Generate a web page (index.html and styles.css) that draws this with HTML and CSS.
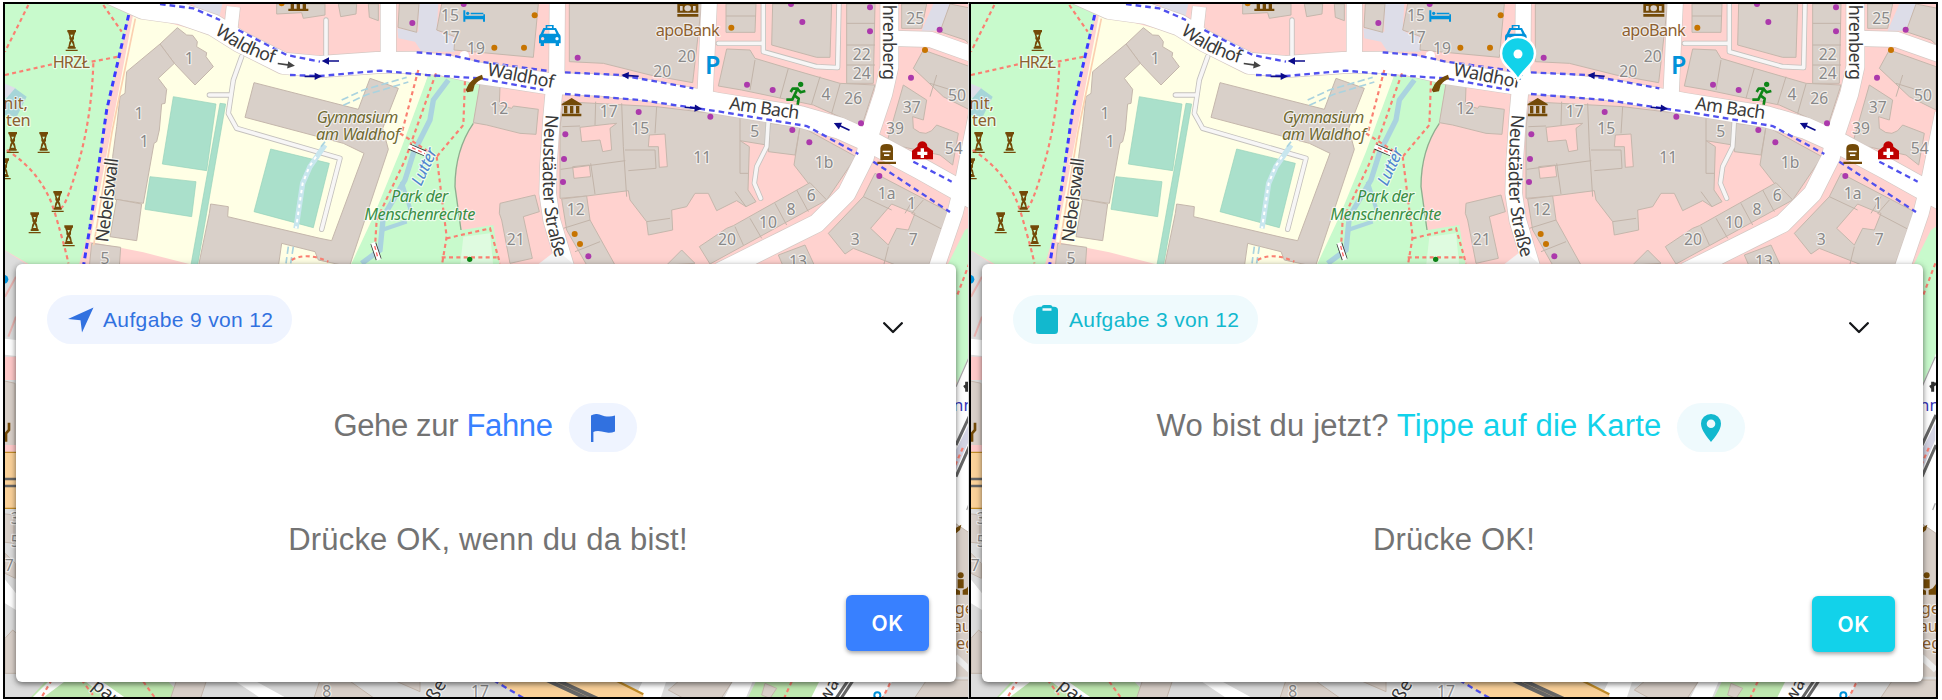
FILE: index.html
```html
<!DOCTYPE html>
<html lang="de">
<head>
<meta charset="utf-8">
<title>Aufgaben</title>
<link rel="stylesheet" href="styles.css">
</head>
<body>
<svg class="defs" width="0" height="0" aria-hidden="true">
  <defs>
    <path id="p-neu" d="M1637 343Q1625 480 1630 580Q1636 690 1670 785"/>
    <path id="p-wald1" d="M643 100Q725 165 830 192"/>
    <g id="monument"><path d="M-13-31H13V-24H-13ZM-18 28H18V32H-18ZM-12 20H12V25H-12ZM-11-24H11L7-12 7-4 4 0 7 5 10 20H-10L-7 5-4 0-7-4-7-12Z" fill="#734a08"/><path d="M-4-17H4L0-8ZM0 4L5 16H-5Z" fill="#c8facc"/></g>
    <path id="arrow" d="M-26-2.500H4V-11L26 0 4 11V2.500H-26Z"/>
  </defs>
</svg>

<template id="map-template">
<svg class="tiles" viewBox="15 12 2895 2079" preserveAspectRatio="xMinYMin slice">
  <rect x="0" y="0" width="2940" height="2100" fill="#ffd2cf"/>

  <!-- land use -->
  <path class="park" d="M0 0H350L388 45 320 330 270 680 235 800H100L0 742Z"/>
  <path class="school" d="M400 40L990 200 1290 205 1230 420 1060 800H600L430 757 270 725 345 330Z"/>
  <path class="park" d="M1285 225L1440 245 1420 370Q1365 450 1365 560L1385 690 1480 675 1500 800H1050L1120 650 1200 455Z"/>
  <path d="M1420 370Q1365 450 1365 560L1383 690" fill="none" stroke="#8fae8f" stroke-width="4"/>
  <path d="M1390 710L1470 700 1480 800H1380Z" fill="#dffbe0"/>
  <path class="plaza" d="M1255 12H1315L1310 90 1325 100 1360 110 1365 155 1265 155 1245 125 1195 115 1192 85 1255 95ZM570 0H670L655 62 600 35ZM2800 12H2850L2820 92H2765Z"/>
  <path class="plaza" d="M0 245L48 265 28 295 0 290Z"/>
  <path d="M45 265L80 290 50 350 15 345V300Z" fill="#a6d5d8"/>
  <path d="M0 742L90 800V2100H0Z" fill="#ddd"/>
  <path class="park" d="M2895 690L2840 800 2870 1150H2940V660Z"/>

  <!-- pitches -->
  <path class="pitch" d="M520 290L648 312 620 512 487 492ZM450 530L588 545 575 650 435 628ZM660 310L677 312 592 800H572ZM812 447L988 490 940 683 762 635Z"/>

  <!-- buildings -->
  <g class="bld">
    <path d="M480 132L532 83 560 105 578 106 592 125 590 140 620 158 618 170 640 200 585 255 523 190Z"/>
    <path d="M480 132L523 190 475 235 500 268 495 310 485 312 478 390 470 425 462 430 430 610 345 598 338 470 350 380 360 290 375 280 380 215Z"/>
    <path d="M350 598L425 612 410 722 330 710ZM275 730L362 742 358 800H268Z"/>
    <path d="M762 248L1075 328 1110 235 1195 265 1148 385 1165 448 1048 800 955 780 945 755 845 730 835 800H595L628 640 632 612 685 620 683 650 960 715 995 722 1092 460 1030 430 735 352Z"/>
    <path d="M830 12H975V45L910 55 905 38 830 42ZM1015 12H1070L1068 42 1022 50ZM1105 12H1135V62L1108 52ZM1198 12H1257L1250 97 1194 82ZM1325 12H1615L1600 172 1362 150 1365 110 1310 90Z"/>
    <path d="M1708 12H2105L2078 248 1950 225 1810 190 1708 185Z"/>
    <path d="M1440 250L1500 260 1498 315 1535 325 1540 318 1615 328 1608 403 1560 400 1460 375 1420 368ZM1500 610L1605 585 1618 635 1570 650 1597 775 1530 790 1505 660 1498 640Z"/>
    <path d="M1690 305L1970 320 2220 350 2310 360 2300 435 2220 422 2248 440 2244 570 2268 605 2238 620 2210 602 2150 632 2125 580 2085 580 2060 620 2015 630 2018 690 1945 705 1940 665 1890 600 1885 572 1760 588 1680 595 1680 380Z"/>
    <path d="M1685 597L1760 588 1770 660 1845 795H1760L1700 690ZM2310 370L2400 380 2385 465 2305 455ZM2400 378L2568 470 2480 600 2425 550 2382 495Z"/>
    <path d="M2098 740L2180 685 2200 677 2430 548 2480 600 2130 792ZM2335 765L2415 735 2445 800H2350ZM2000 795L2045 750 2085 790ZM0 1140L45 1150V1340H0ZM0 1540L42 1545V1630L0 1625Z"/>
    <path d="M2178 12H2268L2265 97H2178ZM2180 147L2250 150 2265 175 2365 205 2520 250 2625 255 2585 380 2440 315 2225 270 2155 258ZM2318 12H2495L2490 172H2450L2315 135ZM2540 12H2625L2620 250H2540Z"/>
    <path d="M2705 12H2780L2765 85H2705ZM2850 12L2940 30V160L2895 120 2820 95ZM2770 150L2910 200V330L2830 290 2740 205ZM2710 255L2780 300 2770 360 2738 350 2740 385Q2780 420 2810 375L2875 400 2858 495 2820 465 2660 430Z"/>
    <path d="M2625 520L2845 635 2785 800H2700L2560 745 2535 762 2485 700 2590 590Z"/>
  </g>
  <path class="hole" d="M1740 382L1828 372 1850 370 1830 385 1835 450 1808 455 1800 420 1745 425ZM1718 500L1768 495 1772 530 1722 535ZM1948 405L1995 402 2002 500 1978 502 1975 440H1945ZM2675 612L2730 635 2745 640 2725 690 2690 685 2665 735 2612 685Z"/>
  <path class="lines" d="M1787 305L1785 375M1865 310L1870 440 1880 590M1687 380L1740 378M1682 508L1876 482M1772 490L1785 582M1970 320L1965 400M1875 450H1965L1968 505 1885 512M2220 350V520H2244M2205 575L2238 620M1690 685L1770 660M1725 755L1800 725M2265 180L2250 270M2365 205L2340 295M2460 230L2435 312M2520 252L2495 340M2540 70H2625M2540 135H2625M2540 195H2625M2178 48H2268M2390 570L2425 635M2325 610L2360 675M2250 655L2285 715M2205 680L2230 735M2590 590L2675 630M2745 590L2715 640M2770 600L2735 640 2840 695M2665 740L2650 800M2810 225L2790 290M2790 250L2870 275M1940 665L2010 655"/>

  <!-- roads -->
  <g class="casing">
    <path d="M330-20L430 25 540 40 640 75 720 125 850 190 960 200 1130 188 1250 187 1330 195 1440 220 1640 250 1800 255 1950 272 2150 310 2400 350 2520 385 2620 430 2760 505 2930 600" stroke-width="68"/>
    <path d="M1165 0V180M1672 0L1670 250M2128 0L2115 290" stroke-width="50"/>
    <path d="M1664 250L1655 350 1645 500 1643 580 1655 660 1700 810" stroke-width="54"/>
    <path d="M2668 0V200L2650 280 2610 400 2595 470 2540 580 2450 670 2350 720 2160 815" stroke-width="58"/>
    <path d="M2680 115L2790 118 2960 178" stroke-width="50"/>
    <path d="M2930 340L2885 560 2865 640 2800 830" stroke-width="50"/>
    <path d="M700 20L690 110" stroke-width="44"/>
    <path class="svc" d="M725 170L700 240 685 340 710 385 1020 475 965 688M628 285H690M978 60V165M2305 360L2300 440 2270 500 2263 550 2282 595M2155 130H2290M2290 12V155L2450 200 2513 203 2517 12"/>
  </g>
  <g class="road">
    <path d="M330-20L430 25 540 40 640 75 720 125 850 190 960 200 1130 188 1250 187 1330 195 1440 220 1640 250 1800 255 1950 272 2150 310 2400 350 2520 385 2620 430 2760 505 2930 600" stroke-width="64"/>
    <path d="M1165 0V180M1672 0L1670 250M2128 0L2115 290" stroke-width="46"/>
    <path d="M1664 250L1655 350 1645 500 1643 580 1655 660 1700 810" stroke-width="50"/>
    <path d="M2668 0V200L2650 280 2610 400 2595 470 2540 580 2450 670 2350 720 2160 815" stroke-width="54"/>
    <path d="M2680 115L2790 118 2960 178" stroke-width="46"/>
    <path d="M2930 340L2885 560 2865 640 2800 830" stroke-width="46"/>
    <path d="M700 20L690 110" stroke-width="40"/>
    <path class="svc" d="M725 170L700 240 685 340 710 385 1020 475 965 688M628 285H690M978 60V165M2305 360L2300 440 2270 500 2263 550 2282 595M2155 130H2290M2290 12V155L2450 200 2513 203 2517 12"/>
  </g>
  <circle cx="1393" cy="167" r="14" fill="#fff"/>
  <path d="M1605 800L1670 750 1730 800Z" fill="#f3f3f3"/>

  <!-- water -->
  <g fill="none" stroke="#aad3df">
    <path d="M1345 240L1300 300 1290 360 1240 460 1215 540 1150 650 1140 750 1085 790" stroke-width="16"/>
    <path d="M1205 545L1235 640M1145 690L1220 665" stroke-width="12"/>
    <path d="M975 435L930 500 908 550 888 685" stroke-width="16" stroke="#c8e6ee"/>
    <path d="M1025 300L1090 270 1220 232M1030 316L1100 284 1225 246M865 740L858 790M880 740L872 790M963 440L975 425" stroke-width="5" stroke-dasharray="22 10"/>
    <path d="M948 470L928 500 908 550 888 685" stroke="#fff" stroke-width="6" stroke-dasharray="10 12"/>
  </g>

  <!-- foot and cycle paths -->
  <g class="foot">
    <path d="M85 15L15 155M310 15L365 95M15 225L160 192M275 185L355 170M280 190Q275 350 235 490T180 625M20 450Q130 520 165 640T205 790"/>
    <path d="M1255 210L1205 400M1308 220L1215 480 1130 660 1125 740M1200 400L1310 470 1390 375 1395 240M1310 470L1340 710 1325 800M1340 715L1470 685 1500 790M1325 772H1490M875 780Q920 755 985 785"/>
  </g>
  <path d="M386 45L320 330 270 680 250 800" class="cycle wide"/>
  <path class="cycle" d="M480 12L580 25 660 60M715 90L860 165 960 185M870 225L960 228 1140 212 1280 225 1440 235 1630 270M1250 157L1350 165 1440 185 1645 213M1695 217L1860 225 2080 265M1695 282L1920 300 2160 335 2420 378 2575 462M2620 485L2850 636M2740 485L2855 545"/>
  <path d="M390 50L320 390 265 730" fill="none" stroke="#fbd0b0" stroke-width="5" transform="translate(16 6)"/>
  <path d="M1228 440L1275 460M1120 730L1136 778" stroke="#333" stroke-width="18"/>
  <path d="M1226 439L1277 461M1119 728L1137 780" stroke="#fff" stroke-width="13"/>
  <path d="M1236 443L1275 461M1124 738L1134 775" stroke="#f66" stroke-width="4" stroke-dasharray="12 8"/>

  <!-- arrows -->
  <g fill="#0b0b8a">
    <use href="#arrow" x="940" y="229"/>
    <use href="#arrow" transform="translate(991 183) rotate(180)"/>
    <use href="#arrow" transform="translate(1890 227) rotate(184)"/>
    <use href="#arrow" transform="translate(2080 324) rotate(5)"/>
    <use href="#arrow" transform="translate(2525 380) rotate(205)"/>
    <use href="#arrow" transform="translate(859 194) rotate(8)" fill="#444"/>
  </g>

  <!-- points of interest -->
  <g><use href="#monument" x="215" y="121"/><use href="#monument" x="38" y="427"/><use href="#monument" x="131" y="427"/><use href="#monument" x="173" y="604"/><use href="#monument" x="104" y="668"/><use href="#monument" x="206" y="707"/><use href="#monument" x="14" y="506"/></g>
  <g fill="#ac39ac"><circle cx="1237" cy="69" r="9"/><circle cx="1733" cy="173" r="9"/><circle cx="1916" cy="336" r="9"/><circle cx="1696" cy="403" r="9"/><circle cx="1692" cy="477" r="9"/><circle cx="1689" cy="546" r="9"/><circle cx="1765" cy="769" r="9"/><circle cx="2131" cy="350" r="9"/><circle cx="2241" cy="254" r="9"/><circle cx="2318" cy="270" r="9"/><circle cx="2377" cy="390" r="9"/><circle cx="2428" cy="427" r="9"/><circle cx="2583" cy="370" r="9"/><circle cx="2407" cy="66" r="9"/><circle cx="2610" cy="22" r="9"/><circle cx="2610" cy="94" r="9"/><circle cx="2819" cy="89" r="9"/><circle cx="2733" cy="233" r="9"/><circle cx="2638" cy="528" r="9"/><circle cx="2373" cy="12" r="9"/><circle cx="1391" cy="12" r="9"/></g>
  <g fill="#c77400"><circle cx="1604" cy="46" r="9"/><circle cx="1483" cy="143" r="9"/><circle cx="1572" cy="143" r="9"/><circle cx="2194" cy="83" r="9"/><circle cx="2775" cy="150" r="9"/><circle cx="1724" cy="702" r="9"/><circle cx="1740" cy="732" r="9"/><circle cx="845" cy="10" r="9"/></g>
  <g fill="#0092da">
    <path d="M1390 31H1396V47H1450V43H1455V65H1449V58H1396V65H1390ZM1412 38H1450V43H1412Z"/><circle cx="1403" cy="40" r="5"/>
    <path fill-rule="evenodd" d="M1637 84V75H1661V84H1668L1677 101Q1682 104 1682 110V130H1677V138H1667V130H1632V138H1622V130H1617V110Q1617 104 1622 101L1630 84ZM1635 90L1630 101H1669L1664 90ZM1628 111A5 5 0 1 0 1628 121A5 5 0 1 0 1628 111ZM1671 111A5 5 0 1 0 1671 121A5 5 0 1 0 1671 111ZM1642 79V84H1656V79Z"/>
    <text x="2115" y="222" font-size="74" font-weight="600" textLength="46" lengthAdjust="spacingAndGlyphs">P</text>
  </g>
  <g fill="#734a08">
    <path d="M1685 312L1715 294 1745 312V316H1685ZM1692 318H1702V340H1692ZM1710 318H1720V340H1710ZM1728 318H1738V340H1728ZM1686 341H1744V349H1686Z"/>
    <path d="M865 26H925V33H865ZM872 12H882V26H872ZM890 12H900V26H890ZM908 12H918V26H908Z"/>
    <path fill-rule="evenodd" d="M2032 10H2095V38H2032ZM2040 18V32H2048V18ZM2079 18V32H2087V18ZM2063 16A10 9 0 1 0 2063 34A10 9 0 1 0 2063 16ZM2032 42H2095V50H2032Z"/>
    <path fill-rule="evenodd" d="M2641 480V445Q2641 432 2660 432Q2679 432 2679 445V480ZM2648 452V457H2672V452ZM2652 463V468H2668V463ZM2632 485H2688V492H2632Z"/>
    <path d="M1397 270L1406 252Q1420 233 1446 224L1450 238Q1435 240 1424 255L1419 274 1402 277Z"/>
  </g>
  <path d="M2736 478V452L2752 440Q2752 426 2767 424Q2782 426 2782 440L2799 452V478Z" fill="#bf0000"/>
  <path d="M2762 445H2772V455H2782V465H2772V474H2762V465H2752V455H2762Z" fill="#fff"/>
  <g stroke="#0d8517" stroke-width="8" fill="none" stroke-linejoin="round"><circle cx="2402" cy="253" r="4"/><path d="M2372 276L2378 266H2393L2383 286 2396 296 2393 314M2394 268L2402 277 2416 273M2382 288L2377 299H2359"/></g>
  <circle cx="1409" cy="778" r="8" fill="#0d8517"/>

  <!-- labels -->
  <g class="num">
    <text x="568" y="193">1</text><text x="417" y="358">1</text><text x="433" y="442">1</text><text x="315" y="793">5</text>
    <text x="1350" y="62">15</text><text x="1352" y="128">17</text><text x="1428" y="162">19</text><text x="1498" y="343">12</text><text x="1826" y="352">17</text><text x="1921" y="401">15</text><text x="1727" y="646">12</text><text x="1547" y="736">21</text>
    <text x="2060" y="186">20</text><text x="1987" y="232">20</text><text x="2107" y="488">11</text><text x="2264" y="411">5</text><text x="2472" y="505">1b</text><text x="2434" y="604">6</text><text x="2373" y="645">8</text><text x="2304" y="684">10</text><text x="2181" y="736">20</text><text x="2394" y="800">13</text>
    <text x="2585" y="181">22</text><text x="2585" y="238">24</text><text x="2560" y="312">26</text><text x="2478" y="299">4</text><text x="2746" y="71">25</text><text x="2871" y="304">50</text><text x="2735" y="338">37</text><text x="2685" y="403">39</text><text x="2861" y="463">54</text><text x="2660" y="596">1a</text><text x="2735" y="627">1</text><text x="2566" y="735">3</text><text x="2740" y="735">7</text>
  </g>
  <g class="poi">
    <text x="158" y="205" textLength="112">HRZŁ</text><text x="10" y="326">nit,</text><text x="18" y="379" textLength="74">ten</text><text x="1967" y="107" textLength="192">apoBank</text>
  </g>
  <g class="it" fill="#6f6a32"><text x="950" y="368" textLength="245">Gymnasium</text><text x="948" y="421" textLength="252">am Waldhof</text></g>
  <g class="it" fill="#3a8f45"><text x="1173" y="606" textLength="172">Park der</text><text x="1093" y="660" textLength="333">Menschenrechte</text></g>
  <text class="it" fill="#4f86cf" transform="translate(1263 560) rotate(-65)" textLength="118">Lutter</text>
  <g class="street">
    <text textLength="200"><textPath href="#p-wald1">Waldhof</textPath></text>
    <text transform="translate(1460 226) rotate(11)" textLength="203">Waldhof</text>
    <text transform="translate(2186 328) rotate(8)" textLength="212">Am Bach</text>
    <text textLength="436"><textPath href="#p-neu">Neustädter Straße</textPath></text>
    <text transform="translate(2648 14) rotate(90)" textLength="226">hrenberg</text>
    <text transform="translate(324 728) rotate(-83)" textLength="254">Nebelswall</text>
  </g>

  <!-- left edge -->
  <path d="M0 1015L48 1020V1068L0 1062ZM0 1720L48 1780V1830L0 1800Z" fill="#fff"/>
  <path d="M15 890L48 830M25 1010L48 950" stroke="#e8b5b2" stroke-width="6"/>
  <circle cx="12" cy="838" r="13" fill="#0092da"/>
  <path d="M0 1070H50V1140H0ZM0 1335H50V1355H0Z" fill="#ffc9c9"/>
  <path d="M27 1268V1290L18 1300V1325" stroke="#734a08" stroke-width="8" fill="none"/>
  <path d="M0 1357H50V1525H0Z" fill="#fbd29a" stroke="#c28c28" stroke-width="4"/>
  <path d="M0 1437H50M0 1458H50" stroke="#666" stroke-width="8"/>
  <path class="bld" d="M15 1915L38 1890 50 1900V2020H15ZM15 1660L46 1690V1735L15 1720Z"/>
  <g class="num"><text x="46" y="1572">3</text><text x="46" y="1640">5</text><text x="28" y="1712">7</text></g>

  <!-- right edge -->
  <path d="M2910 1060L2866 1160V1800L2910 1840Z" fill="#fff"/>
  <path d="M2868 1160L2908 1070M2900 1530L2908 1510" stroke="#aaa" stroke-width="4"/>
  <path d="M2908 790L2870 890" class="foot"/>
  <path d="M2868 1335L2910 1245M2868 1430L2910 1335" stroke="#666" stroke-width="9"/>
  <path d="M2868 1350L2908 1270V1320L2868 1410Z" fill="#d4d4e4"/>
  <path d="M2866 1395L2890 1340" class="foot"/>
  <path class="bld" d="M2866 1570L2910 1600V2100H2850Z"/>
  <path d="M2866 1970L2910 2010" stroke="#eee" stroke-width="18"/>
  <path d="M2892 1162L2910 1150M2900 1145V1175" stroke="#333" stroke-width="9"/>
  <path d="M2866 1585L2884 1574 2880 1590 2868 1600Z" fill="#734a08"/>
  <g fill="#734a08"><circle cx="2882" cy="1726" r="9"/><path d="M2873 1738H2891V1765H2873ZM2868 1766L2880 1772V1784H2868ZM2888 1784V1770L2900 1765 2910 1752V1784Z"/></g>
  <text class="it up" x="2860" y="1232" fill="#3535b8">nn</text>
  <g class="poi"><text x="2864" y="1842">ge</text><text x="2858" y="1895">au</text><text x="2868" y="1948">eg</text></g>

  <!-- bottom edge -->
  <path d="M0 2030H2910V2100H0Z" fill="#ddd"/>
  <path d="M140 2040H500L560 2100H85ZM2270 2040H2500L2460 2100H2240Z" fill="#bfe8b0"/>
  <path d="M90 2100L150 2040H200L120 2100ZM250 2040H300L385 2100H330ZM700 2040H760L870 2100H790ZM1930 2040H2000L1980 2100H1900ZM2200 2040H2260L2235 2100H2170ZM2460 2040H2680L2640 2100H2430Z" fill="#fff"/>
  <path class="bld" d="M530 2040H620L600 2100H510ZM960 2040H1045L1130 2100H940ZM1180 2040H1260V2075ZM2040 2040H2200L2160 2100H2060L2005 2070ZM2295 2050L2330 2065 2310 2095 2285 2085ZM2780 2040H2910V2100H2740Z"/>
  <path d="M1480 2040H1850L1930 2083V2100H1580Z" fill="#fbd29a"/>
  <path d="M1640 2040L1770 2100M1670 2040L1800 2100" stroke="#666" stroke-width="12"/>
  <path d="M1845 2040L1930 2083" stroke="#c28c28" stroke-width="7"/>
  <path class="cycle" d="M1480 2040L1580 2100"/>
  <path class="foot" d="M155 2040L120 2100M245 2040L290 2100M430 2045L470 2100M2375 2045L2350 2100M2670 2050L2645 2100"/>
  <path d="M2560 2040L2520 2100M2545 2040L2505 2100" stroke="#666" stroke-width="9"/>
  <g class="street"><text transform="translate(274 2062) rotate(40)">par</text><text transform="translate(1308 2108) rotate(-60)">ße</text><text transform="translate(2484 2112) rotate(-62)">wa</text></g>
  <g class="num"><text x="980" y="2092">8</text><text x="1440" y="2092">17</text></g>
  <circle cx="2632" cy="2086" r="9" fill="none" stroke="#0092da" stroke-width="6"/>
</svg>
</template>

<main class="board">
  <section class="screen blue">
    <div class="map"></div>
    <article class="card">
      <header class="head">
        <div class="chip"><svg class="nav" viewBox="0 0 26 26"><path d="M25.500 0.500L14 25.500 12.500 13.200 0 12Z"/></svg><span>Aufgabe 9 von 12</span></div>
        <svg class="chevron" viewBox="0 0 20 12"><path d="M1.200 1.200L10 10 18.800 1.200"/></svg>
      </header>
      <p class="task"><span class="t1">Gehe zur <b>Fahne</b></span><span class="chip small"><svg class="flag" viewBox="0 0 24 28"><path d="M0 1.500Q4-.8 8.500 .4Q15 2.800 18 2.600Q21 2.500 24 1.500V17.500Q20 19.300 16 18.600Q10 17 7 17Q4 17.100 2.400 18V28H0Z"/></svg></span></p>
      <p class="hint">Drücke OK, wenn du da bist!</p>
      <footer class="foot-row"><button class="ok">OK</button></footer>
    </article>
  </section>
  <section class="screen cyan">
    <div class="map"></div>
    <svg class="marker" viewBox="0 0 38 46"><path d="M19 44C14 33 2 29 2 17.500A17 16.500 0 0 1 36 17.500C36 29 24 33 19 44Z"/><circle cx="19" cy="18" r="4.500"/></svg>
    <article class="card">
      <header class="head">
        <div class="chip"><svg class="clip" viewBox="0 0 22 29"><path fill-rule="evenodd" d="M5.500 1.800Q6 0 8 0H14Q16 0 16.500 1.800H18Q22 1.800 22 5.500V25.500Q22 29 18.500 29H3.500Q0 29 0 25.500V5.500Q0 1.800 4 1.800ZM6.500 3.300V5.700H15.500V3.300Z"/></svg><span>Aufgabe 3 von 12</span></div>
        <svg class="chevron" viewBox="0 0 20 12"><path d="M1.200 1.200L10 10 18.800 1.200"/></svg>
      </header>
      <p class="task"><span class="t2">Wo bist du jetzt? <b>Tippe auf die Karte</b></span><span class="chip small"><svg class="pin" viewBox="0 0 20 28"><path fill-rule="evenodd" d="M10 0A10 9.500 0 0 1 20 9.500C20 16 14 23 10 28C6 23 0 16 0 9.500A10 9.500 0 0 1 10 0ZM10 5.500A4.300 4.300 0 1 0 10 14.100A4.300 4.300 0 1 0 10 5.500Z"/></svg></span></p>
      <p class="hint">Drücke OK!</p>
      <footer class="foot-row"><button class="ok">OK</button></footer>
    </article>
  </section>
</main>
<script src="map.js"></script>
</body>
</html>
```
FILE: styles.css
```css
* { box-sizing: border-box; }
body { margin: 0; height: 700px; overflow: hidden; background: #fff; font-family: "Liberation Sans", Arial, sans-serif; }
.defs { position: absolute; }
.board { display: flex; padding: 2px 0 0 3px; }
.screen { position: relative; height: 697px; border: 2px solid #000; padding: 260px 12px 0 11px; overflow: hidden; }
.blue { width: 966px; border-right: 1px solid #ddd; --main: #3880ff; --dark: #3171e0; --tint: #eff4ff; }
.cyan { width: 969px; --main: #12d2ea; --dark: #12b8ce; --tint: #effafd; padding-right: 13px; }
.map { position: absolute; inset: 0; }
.tiles { display: block; width: 965px; height: 693px; font-family: "Noto Sans", "Open Sans", sans-serif; }

.park { fill: #c8facc; }
.school { fill: #ffffe5; }
.plaza { fill: #dddde8; }
.pitch { fill: #aae0cb; stroke: #96d2ba; stroke-width: 2; }
.bld { fill: #d9d0c9; stroke: #c5b7ac; stroke-width: 3; }
.hole { fill: #ffd2cf; stroke: #c5b7ac; stroke-width: 3; }
.lines { fill: none; stroke: #c2b4a9; stroke-width: 3; }
.casing, .road { fill: none; stroke-linejoin: round; }
.casing { stroke: #d5c9c4; }
.road { stroke: #fff; }
.casing .svc { stroke: #c4c1bd; stroke-width: 16; stroke-linecap: round; }
.road .svc { stroke: #f7f6f6; stroke-width: 11; stroke-linecap: round; }
.foot { fill: none; stroke: #fa8072; stroke-width: 6.5; stroke-dasharray: 12 10; }
.cycle { fill: none; stroke: #5050ee; stroke-width: 7; stroke-dasharray: 17 12; }
.wide { stroke: #3a3aff; stroke-width: 9; }
.num { font-size: 47px; fill: #888; text-anchor: middle; }
.num, .poi, .it, .street { paint-order: stroke; stroke: rgba(255, 255, 255, .65); stroke-width: 7px; stroke-linejoin: round; }
.poi { font-size: 49px; fill: #8d6030; }
.it { font-size: 49px; font-style: italic; }
.up { font-style: normal; }
.street { font-size: 54px; fill: #3a3a3a; }

.card { position: relative; height: 418px; padding: 31px 27px 31px 31px; border-radius: 6px; background: #fff; box-shadow: 0 2px 5px rgba(0, 0, 0, .42), 0 2px 10px rgba(0, 0, 0, .18); display: flex; flex-direction: column; }
.cyan .card { padding-right: 28px; padding-bottom: 30px; }
.head { display: flex; justify-content: space-between; align-items: flex-start; }
.chip { display: flex; align-items: center; width: 245px; height: 49px; padding-left: 21px; border-radius: 25px; background: var(--tint); color: var(--dark); font-size: 21px; letter-spacing: .36px; white-space: nowrap; }
.chip svg { flex: none; fill: var(--dark); }
.nav { width: 26px; height: 26px; margin-right: 9px; }
.clip { width: 22px; height: 29px; margin: 0 11px 0 2px; }
.chevron { width: 20px; height: 12px; margin: 27px 26px 0 0; fill: none; stroke: #15171a; stroke-width: 2.3; stroke-linecap: round; stroke-linejoin: round; }
.task, .hint { margin: 0; font-size: 31px; color: #737373; text-align: center; white-space: nowrap; }
.task { display: flex; justify-content: center; align-items: center; gap: 16px; margin-top: 59px; padding-right: 6px; }
.task b { font-weight: 400; color: var(--main); }
.t1, .t2 { padding-bottom: 3px; }
.t1 { letter-spacing: -.35px; }
.t2 { letter-spacing: .2px; }
.small { width: 68px; padding: 0; justify-content: center; }
.flag { width: 24px; height: 28px; }
.pin { width: 20px; height: 28px; }
.hint { height: 36px; margin-top: 70px; line-height: 36px; letter-spacing: .18px; }
.foot-row { display: flex; justify-content: flex-end; margin-top: auto; }
.ok { width: 83px; height: 56px; padding: 0; border: 0; border-radius: 6px; background: var(--main); color: #fff; font: 600 21px Inter, sans-serif; letter-spacing: .6px; box-shadow: 0 2px 4px rgba(0, 0, 0, .36); }
.marker { position: absolute; left: 528px; top: 32px; width: 38px; height: 46px; fill: #12d2ea; stroke: #fff; stroke-width: 2.500; }
.marker circle { fill: #fff; stroke: none; }
```
FILE: map.js
```js
// Both screens show the same map section.
const mapTemplate = document.getElementById('map-template');
document.querySelectorAll('.map').forEach((host) => {
  host.append(mapTemplate.content.cloneNode(true));
});
```
